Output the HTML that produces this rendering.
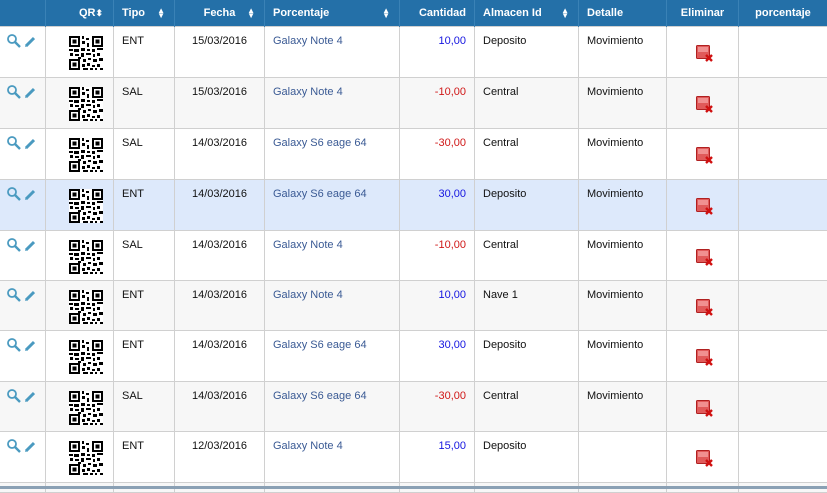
<!DOCTYPE html>
<html><head><meta charset="utf-8"><style>
body{margin:0;width:827px;height:489px;overflow:hidden;background:#fff;font-family:"Liberation Sans",Arial,sans-serif;font-size:11px;color:#111}
table{border-collapse:collapse;table-layout:fixed;width:828px;position:absolute;top:0;left:-1px}
th{background:#2470a8;color:#fff;font-weight:bold;height:26px;padding:0 8px;text-align:left;border-right:1px solid #3a82b6;font-size:11px;position:relative}
th .s{position:absolute;right:9px;top:8px;font-size:8px;line-height:5px}
td{border:1px solid #d0d0d0;vertical-align:top;padding:8px 8px 0;position:relative}
tr.a td{background:#fff}tr.b td{background:#f7f7f7}tr.h td{background:#dde9fb}
.r{text-align:right}.c{text-align:center}
.blue{color:#1515e0}.red{color:#d01818}.lnk{color:#3a5a94}
.ic{position:absolute;left:7px;top:7px}
.qr{position:absolute;left:23px;top:9px}
.del{position:absolute;left:29px;top:18px}
.bot{position:absolute;left:0;top:486px;width:827px;height:3px;background:#8aa0b4}
</style></head><body>
<svg width="0" height="0" style="position:absolute"><defs>
<g id="q"><rect width="34" height="34" fill="#fff"/>
<path fill="#000" d="M0 0h11v11H0zM2 2v7h7V2zM3.5 3.5h4v4h-4z M23 0h11v11H23zM25 2v7h7V2zM26.5 3.5h4v4h-4z M0 23h11v11H0zM2 25v7h7v-7zM3.5 26.5h4v4h-4z M13 0h2v3h-2zM17 2h3v2h-3zM13 5h3v3h-3zM18 7h2v4h-2zM0 13h4v2H0zM5 13h5v3H5zM12 12h4v3h-4zM18 13h3v2h-3zM23 13h3v3h-3zM28 12h6v2h-6zM1 17h3v3H1zM6 18h4v2H6zM12 17h3v4h-3zM17 17h5v2h-5zM24 18h2v3h-2zM28 17h3v3h-3zM9 21h3v2H9zM14 23h3v3h-3zM19 22h3v2h-3zM24 23h4v3h-4zM30 22h4v3h-4zM13 28h3v3h-3zM18 27h3v3h-3zM23 29h3v2h-3zM28 28h3v3h-3zM14 32h5v2h-5zM21 32h3v2h-3zM26 32h2v2h-2zM31 32h3v2h-3z"/></g>
<g id="d"><rect x="0.5" y="0.5" width="13" height="13" rx="1" fill="#e05a5a" stroke="#b02020"/><rect x="2" y="2" width="10" height="5" fill="#f09090"/><path d="M10 10l6 6M16 10l-6 6" stroke="#d01010" stroke-width="2.4"/></g>
<g id="e"><circle cx="5" cy="5" r="4" fill="none" stroke="#4a9ac0" stroke-width="1.8"/><path d="M8 8l5 5" stroke="#4a9ac0" stroke-width="2.4"/><path d="M19 12l8-8" stroke="#4a9ac0" stroke-width="3"/><path d="M18 13l1-3 2 2z" fill="#4a9ac0"/></g>
</defs></svg>
<table>
<colgroup><col style="width:46px"><col style="width:68px"><col style="width:61px"><col style="width:90px"><col style="width:135px"><col style="width:75px"><col style="width:104px"><col style="width:88px"><col style="width:72px"><col style="width:89px"></colgroup>
<tr><th></th><th class="r" style="padding-right:10px">QR<span style="font-size:9px">⬍</span></th><th>Tipo<span class="s">▲<br>▼</span></th><th class="c">Fecha<span class="s">▲<br>▼</span></th><th>Porcentaje<span class="s">▲<br>▼</span></th><th class="r">Cantidad</th><th>Almacen Id<span class="s">▲<br>▼</span></th><th>Detalle</th><th class="c">Eliminar</th><th class="c">porcentaje</th></tr>
<tr class="a" style="height:51px"><td><svg class="ic" width="28" height="16"><use href="#e"/></svg></td><td><svg class="qr" width="34" height="34"><use href="#q"/></svg></td><td>ENT</td><td class="c">15/03/2016</td><td class="lnk">Galaxy Note 4</td><td class="r blue">10,00</td><td>Deposito</td><td>Movimiento</td><td><svg class="del" width="17" height="17"><use href="#d"/></svg></td><td></td></tr>
<tr class="b" style="height:51px"><td><svg class="ic" width="28" height="16"><use href="#e"/></svg></td><td><svg class="qr" width="34" height="34"><use href="#q"/></svg></td><td>SAL</td><td class="c">15/03/2016</td><td class="lnk">Galaxy Note 4</td><td class="r red">-10,00</td><td>Central</td><td>Movimiento</td><td><svg class="del" width="17" height="17"><use href="#d"/></svg></td><td></td></tr>
<tr class="a" style="height:51px"><td><svg class="ic" width="28" height="16"><use href="#e"/></svg></td><td><svg class="qr" width="34" height="34"><use href="#q"/></svg></td><td>SAL</td><td class="c">14/03/2016</td><td class="lnk">Galaxy S6 eage 64</td><td class="r red">-30,00</td><td>Central</td><td>Movimiento</td><td><svg class="del" width="17" height="17"><use href="#d"/></svg></td><td></td></tr>
<tr class="h" style="height:51px"><td><svg class="ic" width="28" height="16"><use href="#e"/></svg></td><td><svg class="qr" width="34" height="34"><use href="#q"/></svg></td><td>ENT</td><td class="c">14/03/2016</td><td class="lnk">Galaxy S6 eage 64</td><td class="r blue">30,00</td><td>Deposito</td><td>Movimiento</td><td><svg class="del" width="17" height="17"><use href="#d"/></svg></td><td></td></tr>
<tr class="a" style="height:50px"><td><svg class="ic" width="28" height="16"><use href="#e"/></svg></td><td><svg class="qr" width="34" height="34"><use href="#q"/></svg></td><td>SAL</td><td class="c">14/03/2016</td><td class="lnk">Galaxy Note 4</td><td class="r red">-10,00</td><td>Central</td><td>Movimiento</td><td><svg class="del" width="17" height="17"><use href="#d"/></svg></td><td></td></tr>
<tr class="b" style="height:50px"><td><svg class="ic" width="28" height="16"><use href="#e"/></svg></td><td><svg class="qr" width="34" height="34"><use href="#q"/></svg></td><td>ENT</td><td class="c">14/03/2016</td><td class="lnk">Galaxy Note 4</td><td class="r blue">10,00</td><td>Nave 1</td><td>Movimiento</td><td><svg class="del" width="17" height="17"><use href="#d"/></svg></td><td></td></tr>
<tr class="a" style="height:51px"><td><svg class="ic" width="28" height="16"><use href="#e"/></svg></td><td><svg class="qr" width="34" height="34"><use href="#q"/></svg></td><td>ENT</td><td class="c">14/03/2016</td><td class="lnk">Galaxy S6 eage 64</td><td class="r blue">30,00</td><td>Deposito</td><td>Movimiento</td><td><svg class="del" width="17" height="17"><use href="#d"/></svg></td><td></td></tr>
<tr class="b" style="height:50px"><td><svg class="ic" width="28" height="16"><use href="#e"/></svg></td><td><svg class="qr" width="34" height="34"><use href="#q"/></svg></td><td>SAL</td><td class="c">14/03/2016</td><td class="lnk">Galaxy S6 eage 64</td><td class="r red">-30,00</td><td>Central</td><td>Movimiento</td><td><svg class="del" width="17" height="17"><use href="#d"/></svg></td><td></td></tr>
<tr class="a" style="height:51px"><td><svg class="ic" width="28" height="16"><use href="#e"/></svg></td><td><svg class="qr" width="34" height="34"><use href="#q"/></svg></td><td>ENT</td><td class="c">12/03/2016</td><td class="lnk">Galaxy Note 4</td><td class="r blue">15,00</td><td>Deposito</td><td></td><td><svg class="del" width="17" height="17"><use href="#d"/></svg></td><td></td></tr>
<tr class="b" style="height:10px"><td></td><td></td><td></td><td></td><td></td><td></td><td></td><td></td><td></td><td></td></tr>
</table>
<div class="bot"></div>
</body></html>
